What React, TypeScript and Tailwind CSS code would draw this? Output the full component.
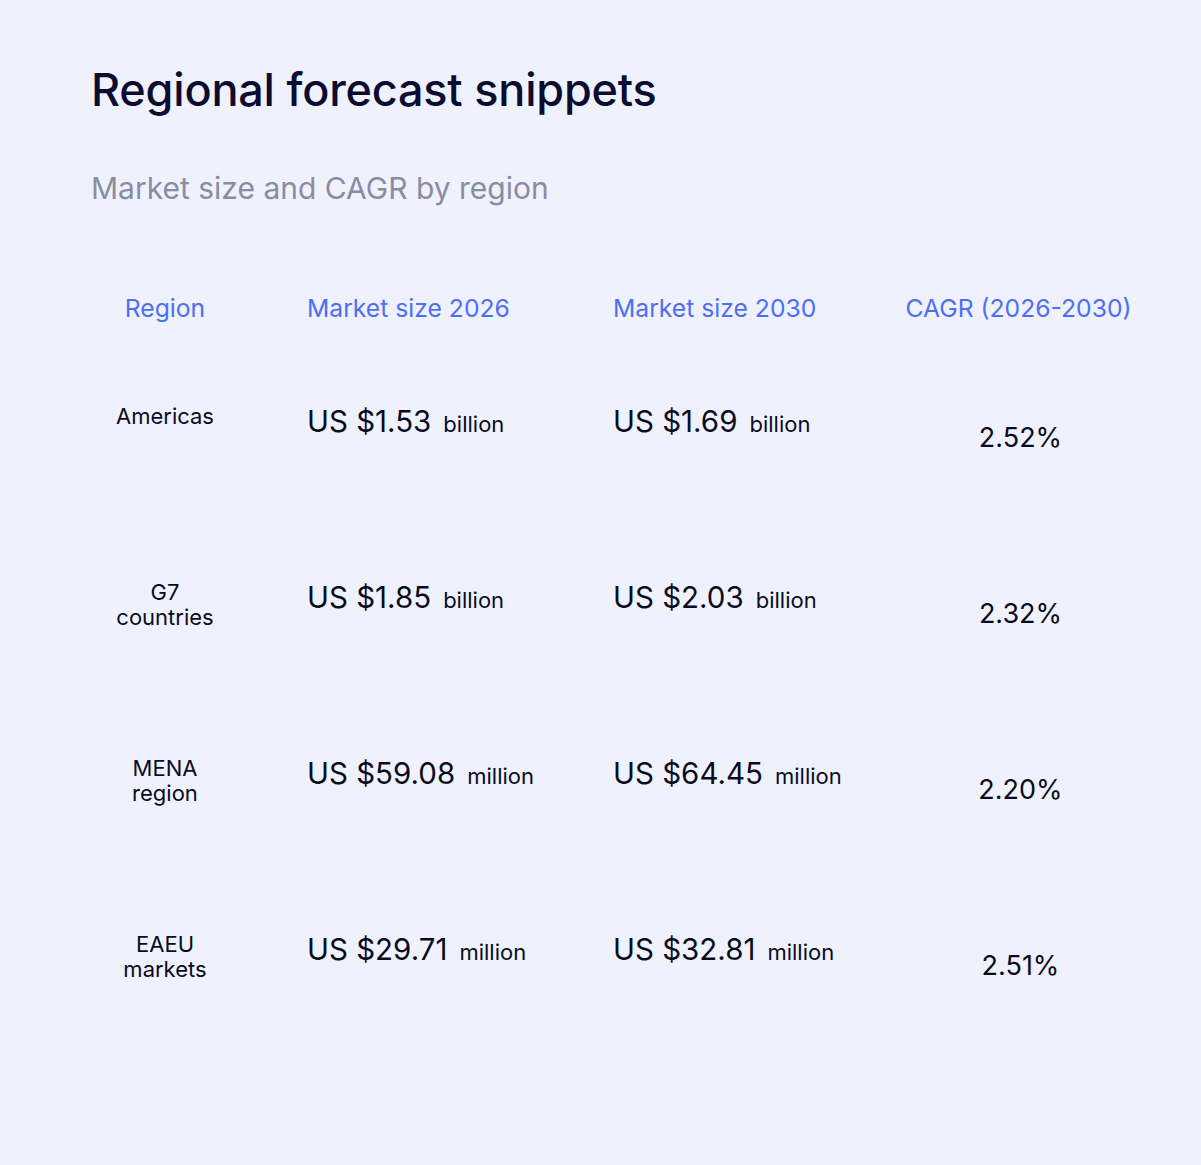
const rows = [
  { region: ["Americas"], y26: "1.53", u26: "billion", y30: "1.69", u30: "billion", cagr: "2.52%" },
  { region: ["G7", "countries"], y26: "1.85", u26: "billion", y30: "2.03", u30: "billion", cagr: "2.32%" },
  { region: ["MENA", "region"], y26: "59.08", u26: "million", y30: "64.45", u30: "million", cagr: "2.20%" },
  { region: ["EAEU", "markets"], y26: "29.71", u26: "million", y30: "32.81", u30: "million", cagr: "2.51%" },
];

const cols = "grid grid-cols-[216px_306px_283px_245px]";

function Amount({ value, unit }: { value: string; unit: string }) {
  return (
    <div className="flex items-baseline whitespace-nowrap pt-[5px] text-[#0b0b1f]">
      <span className="text-[29.5px] leading-[36px]">US ${value}</span>
      <span className="ml-3 text-[22px]">{unit}</span>
    </div>
  );
}

export default function App() {
  return (
    <div
      className="min-h-[1165px] w-full bg-[#eff2fd] px-[91px] pt-[62px]"
      style={{ fontFamily: "Inter, 'Noto Sans', sans-serif" }}
    >
      <h1 className="text-[45px] leading-[56px] font-medium tracking-[-0.2px] text-[#0c0c30]">
        Regional forecast snippets
      </h1>
      <p className="mt-[52px] text-[30px] leading-[36px] text-[#8a8ca3]">Market size and CAGR by region</p>

      <div className={`${cols} mt-[86px] whitespace-nowrap text-[24.7px] leading-[32px] text-[#4d6ef8]`}>
        <div className="w-[148px] text-center">Region</div>
        <div>Market size 2026</div>
        <div>Market size 2030</div>
        <div className="text-center">CAGR (2026-2030)</div>
      </div>

      <div className="mt-[74px] flex flex-col">
        {rows.map((r) => (
          <div key={r.cagr} className={`${cols} h-[176px]`}>
            <div className="w-[148px] pt-[6px] text-center text-[22px] leading-[25px] text-[#0b0b1f]">
              {r.region.map((line) => (
                <div key={line}>{line}</div>
              ))}
            </div>
            <Amount value={r.y26} unit={r.u26} />
            <Amount value={r.y30} unit={r.u30} />
            <div className="pt-[23px] pl-[4px] text-center text-[27px] leading-[34px] text-[#0b0b1f]">{r.cagr}</div>
          </div>
        ))}
      </div>
    </div>
  );
}
